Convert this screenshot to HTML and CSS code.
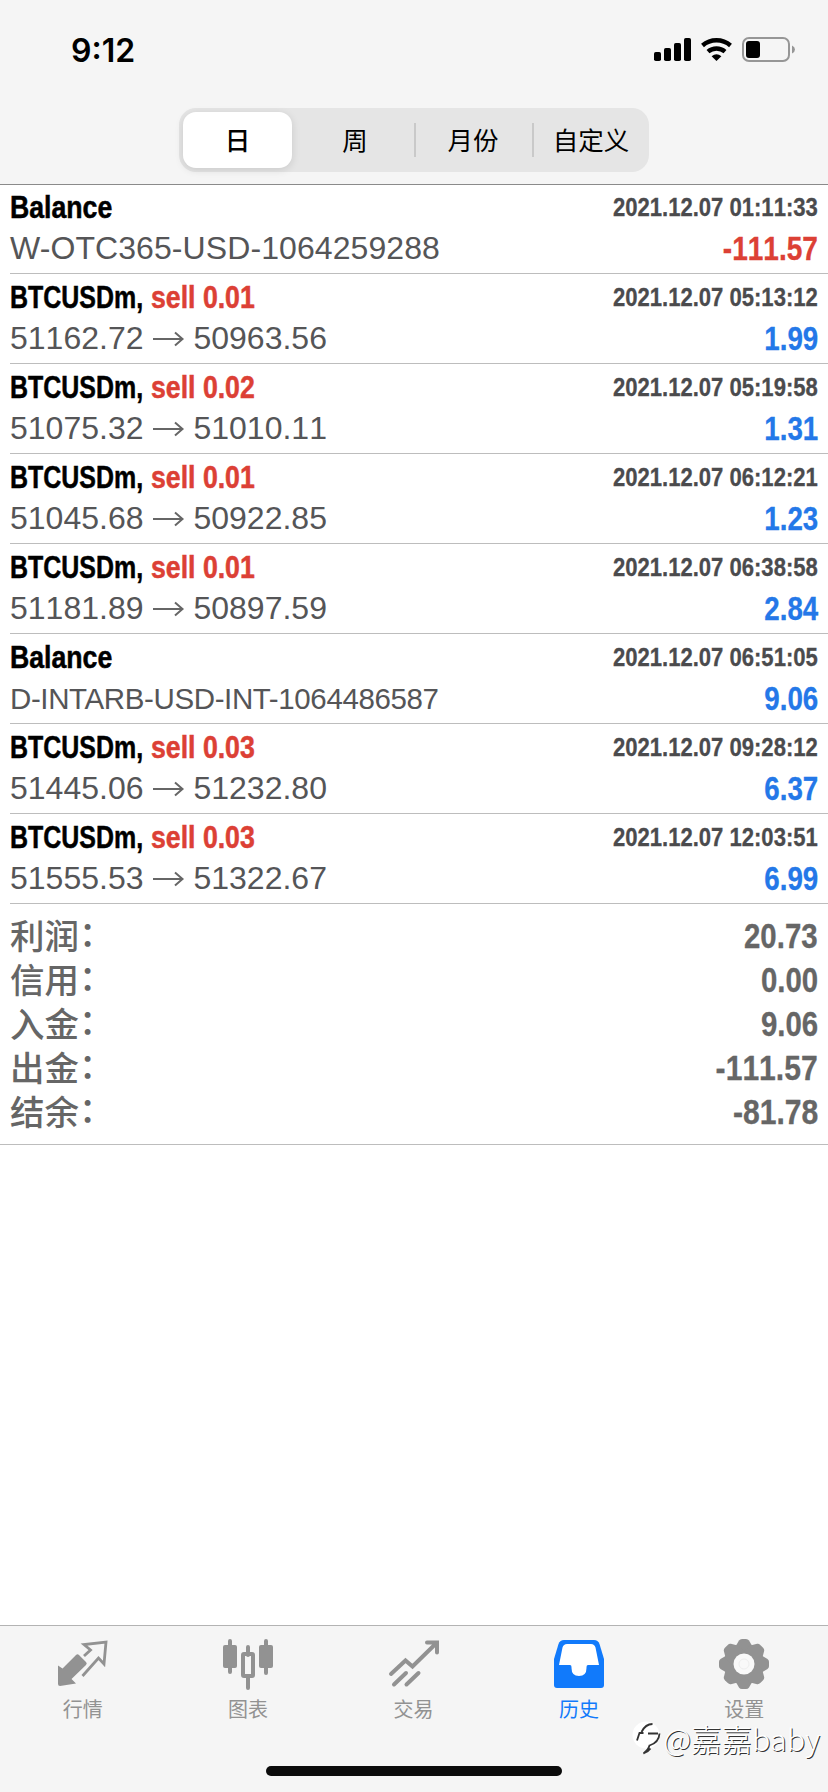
FILE: index.html
```html
<!DOCTYPE html>
<html lang="zh-CN">
<head>
<meta charset="utf-8">
<title>历史</title>
<link rel="stylesheet" href="styles.css">
</head>
<body>
<div class="screen">
  <header class="top">
    <div class="status">
      <span class="clock">9:12</span>
      <svg class="status-icons" width="144" height="28" viewBox="0 0 144 28">
        <rect x="1" y="15" width="7" height="9" rx="1.8"/><rect x="11" y="11" width="7" height="13" rx="1.8"/><rect x="21" y="6" width="7" height="18" rx="1.8"/><rect x="31" y="1" width="7" height="23" rx="1.8"/>
        <g fill="none" stroke="#000" stroke-width="4.4"><path d="M49.500 8.500a21.500 21.500 0 0 1 28 0"/><path d="M55 14.700a13 13 0 0 1 17 0"/></g>
        <path d="M58.600 19.200a8 8 0 0 1 9.800 0l-4.900 4.900z"/>
        <rect x="90" y="1" width="46" height="23" rx="6" fill="none" stroke="#969696" stroke-width="2"/>
        <rect x="93" y="4" width="14" height="17" rx="3"/>
        <path d="M139 8.500q3 1.500 3 4t-3 4z" fill="#969696"/>
      </svg>
    </div>
    <nav class="segments">
      <span class="seg active">日</span><span class="seg">周</span><span class="seg split">月份</span><span class="seg split">自定义</span>
    </nav>
  </header>
  <main class="content">
    <section class="deals">
      <article class="deal first"><div class="line"><b class="name">Balance</b><time class="time">2021.12.07 01:11:33</time></div><div class="line"><span class="detail kerned">W-OTC365-USD-1064259288</span><b class="value loss">-111.57</b></div></article>
      <article class="deal"><div class="line"><b class="symbol">BTCUSDm,</b><b class="side">sell 0.01</b><time class="time">2021.12.07 05:13:12</time></div><div class="line"><span class="detail">51162.72<svg class="arrow" viewBox="0 0 50 24"><path d="M10 12h29M32 5.500l7.500 6.500-7.500 6.500"/></svg>50963.56</span><b class="value">1.99</b></div></article>
      <article class="deal"><div class="line"><b class="symbol">BTCUSDm,</b><b class="side">sell 0.02</b><time class="time">2021.12.07 05:19:58</time></div><div class="line"><span class="detail">51075.32<svg class="arrow" viewBox="0 0 50 24"><path d="M10 12h29M32 5.500l7.500 6.500-7.500 6.500"/></svg>51010.11</span><b class="value">1.31</b></div></article>
      <article class="deal"><div class="line"><b class="symbol">BTCUSDm,</b><b class="side">sell 0.01</b><time class="time">2021.12.07 06:12:21</time></div><div class="line"><span class="detail">51045.68<svg class="arrow" viewBox="0 0 50 24"><path d="M10 12h29M32 5.500l7.500 6.500-7.500 6.500"/></svg>50922.85</span><b class="value">1.23</b></div></article>
      <article class="deal"><div class="line"><b class="symbol">BTCUSDm,</b><b class="side">sell 0.01</b><time class="time">2021.12.07 06:38:58</time></div><div class="line"><span class="detail">51181.89<svg class="arrow" viewBox="0 0 50 24"><path d="M10 12h29M32 5.500l7.500 6.500-7.500 6.500"/></svg>50897.59</span><b class="value">2.84</b></div></article>
      <article class="deal"><div class="line"><b class="name">Balance</b><time class="time">2021.12.07 06:51:05</time></div><div class="line"><span class="detail small">D-INTARB-USD-INT-1064486587</span><b class="value">9.06</b></div></article>
      <article class="deal"><div class="line"><b class="symbol">BTCUSDm,</b><b class="side">sell 0.03</b><time class="time">2021.12.07 09:28:12</time></div><div class="line"><span class="detail">51445.06<svg class="arrow" viewBox="0 0 50 24"><path d="M10 12h29M32 5.500l7.500 6.500-7.500 6.500"/></svg>51232.80</span><b class="value">6.37</b></div></article>
      <article class="deal"><div class="line"><b class="symbol">BTCUSDm,</b><b class="side">sell 0.03</b><time class="time">2021.12.07 12:03:51</time></div><div class="line"><span class="detail">51555.53<svg class="arrow" viewBox="0 0 50 24"><path d="M10 12h29M32 5.500l7.500 6.500-7.500 6.500"/></svg>51322.67</span><b class="value">6.99</b></div></article>
    </section>
    <section class="summary">
      <div class="total"><span class="label">利润<span class="colon">：</span></span><b class="sum">20.73</b></div>
      <div class="total"><span class="label">信用<span class="colon">：</span></span><b class="sum">0.00</b></div>
      <div class="total"><span class="label">入金<span class="colon">：</span></span><b class="sum">9.06</b></div>
      <div class="total"><span class="label">出金<span class="colon">：</span></span><b class="sum negative">-111.57</b></div>
      <div class="total"><span class="label">结余<span class="colon">：</span></span><b class="sum negative">-81.78</b></div>
    </section>
  </main>
  <footer class="bottom">
    <nav class="tabs">
      <a class="tab"><svg class="icon" viewBox="0 0 54 54"><path d="M2 26.500l4.500 3L20 16q1.500-1.500 3 0l7 7q1.500 1.500 0 3L15.500 40l4.500 4.500-16 2.500q-2 0-2-2z" fill="currentColor"/><path d="M28 17l6.500-6L28 5.500l22-2.500-2 22-5.500-6-16 18" fill="none" stroke="currentColor" stroke-width="2.800"/></svg>行情</a>
      <a class="tab"><svg class="icon" viewBox="0 0 54 54"><path d="M9 2v31M45 2v32M27 8v8M27 38v11" stroke="currentColor" stroke-width="4" stroke-linecap="round"/><rect x="2" y="6" width="14" height="23" rx="2" fill="currentColor"/><rect x="38" y="6" width="14" height="23" rx="2" fill="currentColor"/><rect x="22" y="15" width="10" height="22" rx="1" fill="none" stroke="currentColor" stroke-width="4"/></svg>图表</a>
      <a class="tab"><svg class="icon" viewBox="0 0 54 54"><path d="M4 35l14.500-13.500 7 6L49.500 4M40 3.500h10v10M7 45.500l12-11.500M19.500 45.500l12-11.500" fill="none" stroke="currentColor" stroke-width="4" stroke-linecap="round"/></svg>交易</a>
      <a class="tab current"><svg class="icon" viewBox="0 0 54 54"><path d="M12 1h30q4 0 5.500 4L52 20v26q0 3-3 3H5q-3 0-3-3V20L6.500 5Q8 1 12 1z" fill="currentColor"/><path d="M15 5h24q3.500 0 4.500 3.500L47 26H36q-1.500 0-1.500 2v1q0 8-7.500 8t-7.500-8v-1q0-2-1.500-2H7l3.500-17.500Q11.500 5 15 5z" fill="#fff"/></svg>历史</a>
      <a class="tab"><svg class="icon" viewBox="0 0 54 54"><defs><path id="teeth" d="M22 1.500q1-1.500 3-1.500h4q2 0 3 1.500l3.500 6v35l-3.500 6q-1 1.500-3 1.500h-4q-2 0-3-1.500l-3.500-6v-35z"/></defs><g fill="currentColor"><circle cx="27" cy="25" r="20"/><use href="#teeth"/><use href="#teeth" transform="rotate(45 27 25)"/><use href="#teeth" transform="rotate(90 27 25)"/><use href="#teeth" transform="rotate(135 27 25)"/></g><circle cx="27" cy="25" r="10.500" fill="#f9f9f9"/><circle cx="27" cy="25" r="5" fill="none" stroke="#eee"/></svg>设置</a>
    </nav>
    <div class="home"></div>
    <div class="watermark"><svg class="mark" viewBox="0 0 30 36"><circle cx="14" cy="15" r="13.500" fill="#fff"/><path d="M20 23q5-3 7-8 0 11-10 14l-5 4z" fill="#fff"/><path d="M5 20.500l2.500-7.500h4M9.500 12q4-8 11-8M16 13.500h10M27.500 13.500q-.5 9-10 12-1 4-6 8 4-1 7-5" fill="none" stroke="#333" stroke-width="1.800"/></svg><span>@嘉嘉baby</span></div>
  </footer>
</div>
</body>
</html>
```
FILE: styles.css
```css
* { box-sizing: border-box; }
body { margin: 0; background: #fff; font-family: "Liberation Sans", "Noto Sans CJK SC", sans-serif; }
.screen { width: 828px; height: 1792px; display: flex; flex-direction: column; background: #fff; overflow: hidden; }
.top { height: 185px; flex: none; background: #f5f5f5; border-bottom: 1px solid #8a8a8a; }
.status { height: 108px; padding: 37px 31px 0 71px; display: flex; justify-content: space-between; align-items: flex-start; }
.clock { font: 600 32px/27px Inter, sans-serif; }
.segments { width: 470px; height: 64px; margin: 0 auto; padding: 4px; border-radius: 17px; background: #e5e5e5; display: flex; font: 400 25.500px/53px "Noto Sans CJK SC", sans-serif; color: #000; }
.seg { width: 118px; flex: none; position: relative; text-align: center; }
.seg.active { width: 109px; margin-right: 4px; background: #fff; border-radius: 13px; font-weight: 500; box-shadow: 0 2px 8px rgba(0,0,0,.12); }
.seg.split::before { content: ""; position: absolute; left: 0; top: 11px; width: 1.500px; height: 34px; background: #c9c9c9; }
.content { flex: 1; }
.deal { height: 90px; margin-left: 10px; padding: 3px 10px 0 0; border-bottom: 1px solid #bdbdbd; }
.deal.first { height: 89px; padding-top: 2px; }
.line { display: flex; height: 41px; line-height: 41px; white-space: nowrap; }
/* Bold faces are condensed horizontally */
.name, .symbol, .side { font-size: 31px; transform-origin: left; -webkit-text-stroke: .5px currentColor; }
.name, .symbol { color: #000; }
.name { transform: scaleX(.86); }
.symbol { width: 141px; transform: scaleX(.805); }
.side { color: #dc4035; transform: scaleX(.86); }
.time, .value, .sum { margin-left: auto; transform-origin: right; font-weight: 700; font-kerning: none; -webkit-text-stroke: .3px currentColor; }
.time { font-size: 25.500px; color: #4b4b4d; transform: scaleX(.865); }
.detail { font-size: 32px; color: #555557; display: flex; align-items: center; font-kerning: none; }
.detail.kerned { font-kerning: normal; letter-spacing: .08px; }
.detail.small { font-size: 29.500px; font-kerning: normal; letter-spacing: -.38px; }
.arrow { width: 50px; height: 24px; fill: none; stroke: #666; stroke-width: 2; }
.value { font-size: 33px; color: #2478e8; transform: scaleX(.84); }
.value.loss { color: #dc4035; transform: scaleX(.85); }
.summary { height: 241px; padding: 10px 10px 0 10px; border-bottom: 1px solid #bdbdbd; color: #666; }
.total { height: 44px; line-height: 44px; display: flex; }
.label { font: 500 34.500px/40px "Noto Sans CJK SC", sans-serif; }
.colon { display: inline-block; transform: translate(0, -3px); }
.sum { font-size: 35px; transform: scaleX(.84); }
.sum.negative { transform: scaleX(.86); }
.bottom { height: 167px; flex: none; position: relative; background: #f5f5f5; border-top: 1px solid #b3b3b3; }
.tabs { display: flex; padding-top: 13px; margin-right: 1px; }
.tab { flex: 1; display: flex; flex-direction: column; align-items: center; color: #929292; font: 400 20px/28px "Noto Sans CJK SC", sans-serif; }
.tab.current { color: #117afb; }
.icon { width: 54px; height: 54px; margin-bottom: 2px; }
.home { position: absolute; left: 266px; bottom: 16px; width: 296px; height: 10px; border-radius: 5px; background: #0b0b0b; }
.watermark { position: absolute; right: 8px; top: 94px; display: flex; gap: 1px; align-items: center; color: #fff; font: 300 30.500px/36px "Noto Sans CJK SC", sans-serif; text-shadow: 1px 1px 0 #333; }
.mark { width: 30px; height: 36px; }
```
